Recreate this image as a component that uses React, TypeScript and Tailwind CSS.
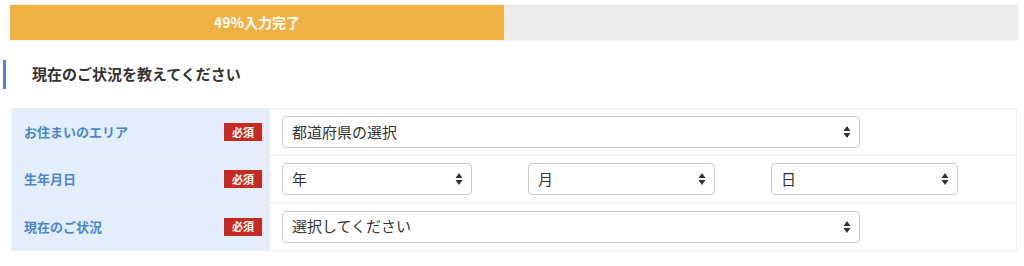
import React from 'react';

const font = { fontFamily: '"Noto Sans CJK JP", "Noto Sans", sans-serif' };

const Arrows: React.FC = () => (
  <svg width="8" height="14" viewBox="0 0 8 14" className="shrink-0">
    <path d="M4 1 L7.5 6 L0.5 6 Z" fill="#333" />
    <path d="M4 13 L7.5 8 L0.5 8 Z" fill="#333" />
  </svg>
);

interface SelectBoxProps {
  label: string;
  width: string;
}

const SelectBox: React.FC<SelectBoxProps> = ({ label, width }) => (
  <div
    className={`${width} h-[32px] flex items-center justify-between pl-[9px] pr-[8px] border border-[#cccccc] rounded-[4px] bg-white text-[15px] text-[#333]`}
  >
    <span>{label}</span>
    <Arrows />
  </div>
);

const Required: React.FC = () => (
  <span className="w-[38px] h-[18px] flex items-center justify-center bg-[#c62a22] text-white text-[11px] font-bold leading-none">
    必須
  </span>
);

interface RowProps {
  label: string;
  last?: boolean;
  children: React.ReactNode;
}

const Row: React.FC<RowProps> = ({ label, last = false, children }) => (
  <div className={`flex h-[47px] ${last ? '' : 'border-b border-[#eeeeee]'}`}>
    <div className="w-[258px] shrink-0 bg-[#e3eefa] flex items-center justify-between pl-[12px] pr-[8px]">
      <span className="text-[13px] font-bold text-[#4a87d0]">{label}</span>
      <Required />
    </div>
    <div className="flex-1 flex items-center pl-[12px] gap-[56px]">{children}</div>
  </div>
);

export default function App() {
  return (
    <div className="w-[1024px] h-[266px] bg-white" style={font}>
      <div className="pt-[4px] pl-[9px]">
        <div className="w-[1010px] h-[37px] bg-[#ebebeb] border border-[#f4f4f4] flex">
          <div className="w-[49%] h-full bg-[#f0b042] flex items-center justify-center text-white text-[14px] font-bold">
            49%入力完了
          </div>
        </div>
      </div>

      <div className="mt-[19px] pl-[3px] flex items-center h-[29px]">
        <div className="w-[3px] h-full bg-[#4a87d0]" />
        <h2 className="ml-[26px] text-[15px] font-bold text-[#333]">現在のご状況を教えてください</h2>
      </div>

      <div className="mt-[19px] ml-[11px] w-[1006px] border border-[#eeeeee]">
        <Row label="お住まいのエリア">
          <SelectBox label="都道府県の選択" width="w-[578px]" />
        </Row>
        <Row label="生年月日">
          <SelectBox label="年" width="w-[190px]" />
          <SelectBox label="月" width="w-[187px]" />
          <SelectBox label="日" width="w-[187px]" />
        </Row>
        <Row label="現在のご状況" last>
          <SelectBox label="選択してください" width="w-[578px]" />
        </Row>
      </div>
    </div>
  );
}
